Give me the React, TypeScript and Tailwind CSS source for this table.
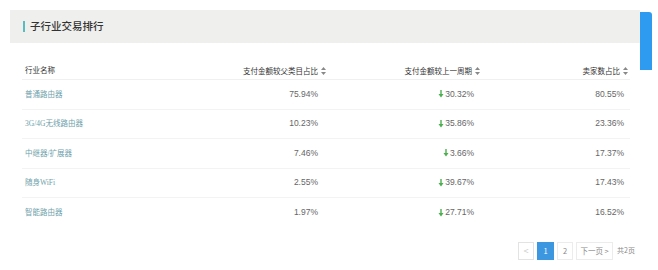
import React from "react";

const rows = [
  { name: "普通路由器", share: "75.94%", change: "30.32%", sellers: "80.55%" },
  { name: "3G/4G无线路由器", share: "10.23%", change: "35.86%", sellers: "23.36%" },
  { name: "中继器/扩展器", share: "7.46%", change: "3.66%", sellers: "17.37%" },
  { name: "随身WiFi", share: "2.55%", change: "39.67%", sellers: "17.43%" },
  { name: "智能路由器", share: "1.97%", change: "27.71%", sellers: "16.52%" },
];

const SortIcon = () => (
  <svg width="5" height="8" viewBox="0 0 5 8" className="ml-[3px] inline-block">
    <path d="M2.5 0 L5 3 H0 Z" fill="#888" />
    <path d="M2.5 8 L5 5 H0 Z" fill="#888" />
  </svg>
);

const DownArrow = () => (
  <svg width="6" height="8" viewBox="0 0 6 8" className="mr-[1px] inline-block">
    <path d="M3 0 V6" stroke="#4caf50" strokeWidth="1.4" />
    <path d="M0.5 4 L3 7.5 L5.5 4 Z" fill="#4caf50" />
  </svg>
);

const App = () => {
  return (
    <div
      className="relative w-[658px] h-[270px] bg-white overflow-hidden"
      style={{ fontFamily: '"Noto Sans CJK SC", "Noto Sans", sans-serif' }}
    >
      <div className="pt-[10px] pl-[10px] pr-[18px]">
        <div className="h-[33px] bg-[#efefed] flex items-center pl-[13px]">
          <div className="w-[2px] h-[11px] bg-[#5bbcc0] mr-[5px]" />
          <span className="text-[10.5px] text-[#333] font-medium leading-none">子行业交易排行</span>
        </div>
      </div>

      <div className="ml-[22px] w-[608px] mt-[19px] text-[7.5px]">
        <div className="flex items-center h-[18px] border-b border-[#f0f0f0] text-[#333]">
          <div className="w-[150px] pl-[3px]" style={{ fontFamily: '"Liberation Serif", "Noto Sans CJK SC", serif' }}>行业名称</div>
          <div className="w-[154px] flex justify-end items-center">支付金额较父类目占比<SortIcon /></div>
          <div className="w-[154px] flex justify-end items-center">支付金额较上一周期<SortIcon /></div>
          <div className="w-[150px] flex justify-end items-center pr-[2px]">卖家数占比<SortIcon /></div>
        </div>
        {rows.map((r, i) => (
          <div
            key={i}
            className={`flex items-center h-[29.5px] ${i < rows.length - 1 ? "border-b border-[#f3f3f3]" : ""}`}
          >
            <div className="w-[150px] pl-[3px] text-[#6f9fab]" style={{ fontFamily: '"Liberation Serif", "Noto Sans CJK SC", serif' }}>{r.name}</div>
            <div className="w-[154px] text-right pr-[8px] text-[#666] text-[8.5px]" style={{ fontFamily: '"Liberation Sans", sans-serif' }}>{r.share}</div>
            <div className="w-[154px] flex justify-end items-center pr-[6px] text-[#666] text-[8.5px]" style={{ fontFamily: '"Liberation Sans", sans-serif' }}>
              <DownArrow />{r.change}
            </div>
            <div className="w-[150px] text-right pr-[6px] text-[#666] text-[8.5px]" style={{ fontFamily: '"Liberation Sans", sans-serif' }}>{r.sellers}</div>
          </div>
        ))}
      </div>

      <div className="flex items-center justify-end pr-[23px] mt-[14px] gap-[3px] text-[7.5px] text-[#888]">
        <div className="w-[16px] h-[18px] border border-[#e3e3e3] flex items-center justify-center text-[#ccc] text-[9px]">&lt;</div>
        <div className="w-[17px] h-[18px] bg-[#3d97e0] text-white flex items-center justify-center">1</div>
        <div className="w-[16px] h-[18px] border border-[#ececec] flex items-center justify-center">2</div>
        <div className="w-[37px] h-[18px] border border-[#ececec] flex items-center justify-center">下一页 &gt;</div>
        <div className="ml-[1px] text-[7px] text-[#888]">共2页</div>
      </div>

      <div className="absolute left-[640px] top-[12px] w-[12px] h-[58px] bg-[#2f9bf0] rounded-tr-[3px]" />
    </div>
  );
};

export default App;
